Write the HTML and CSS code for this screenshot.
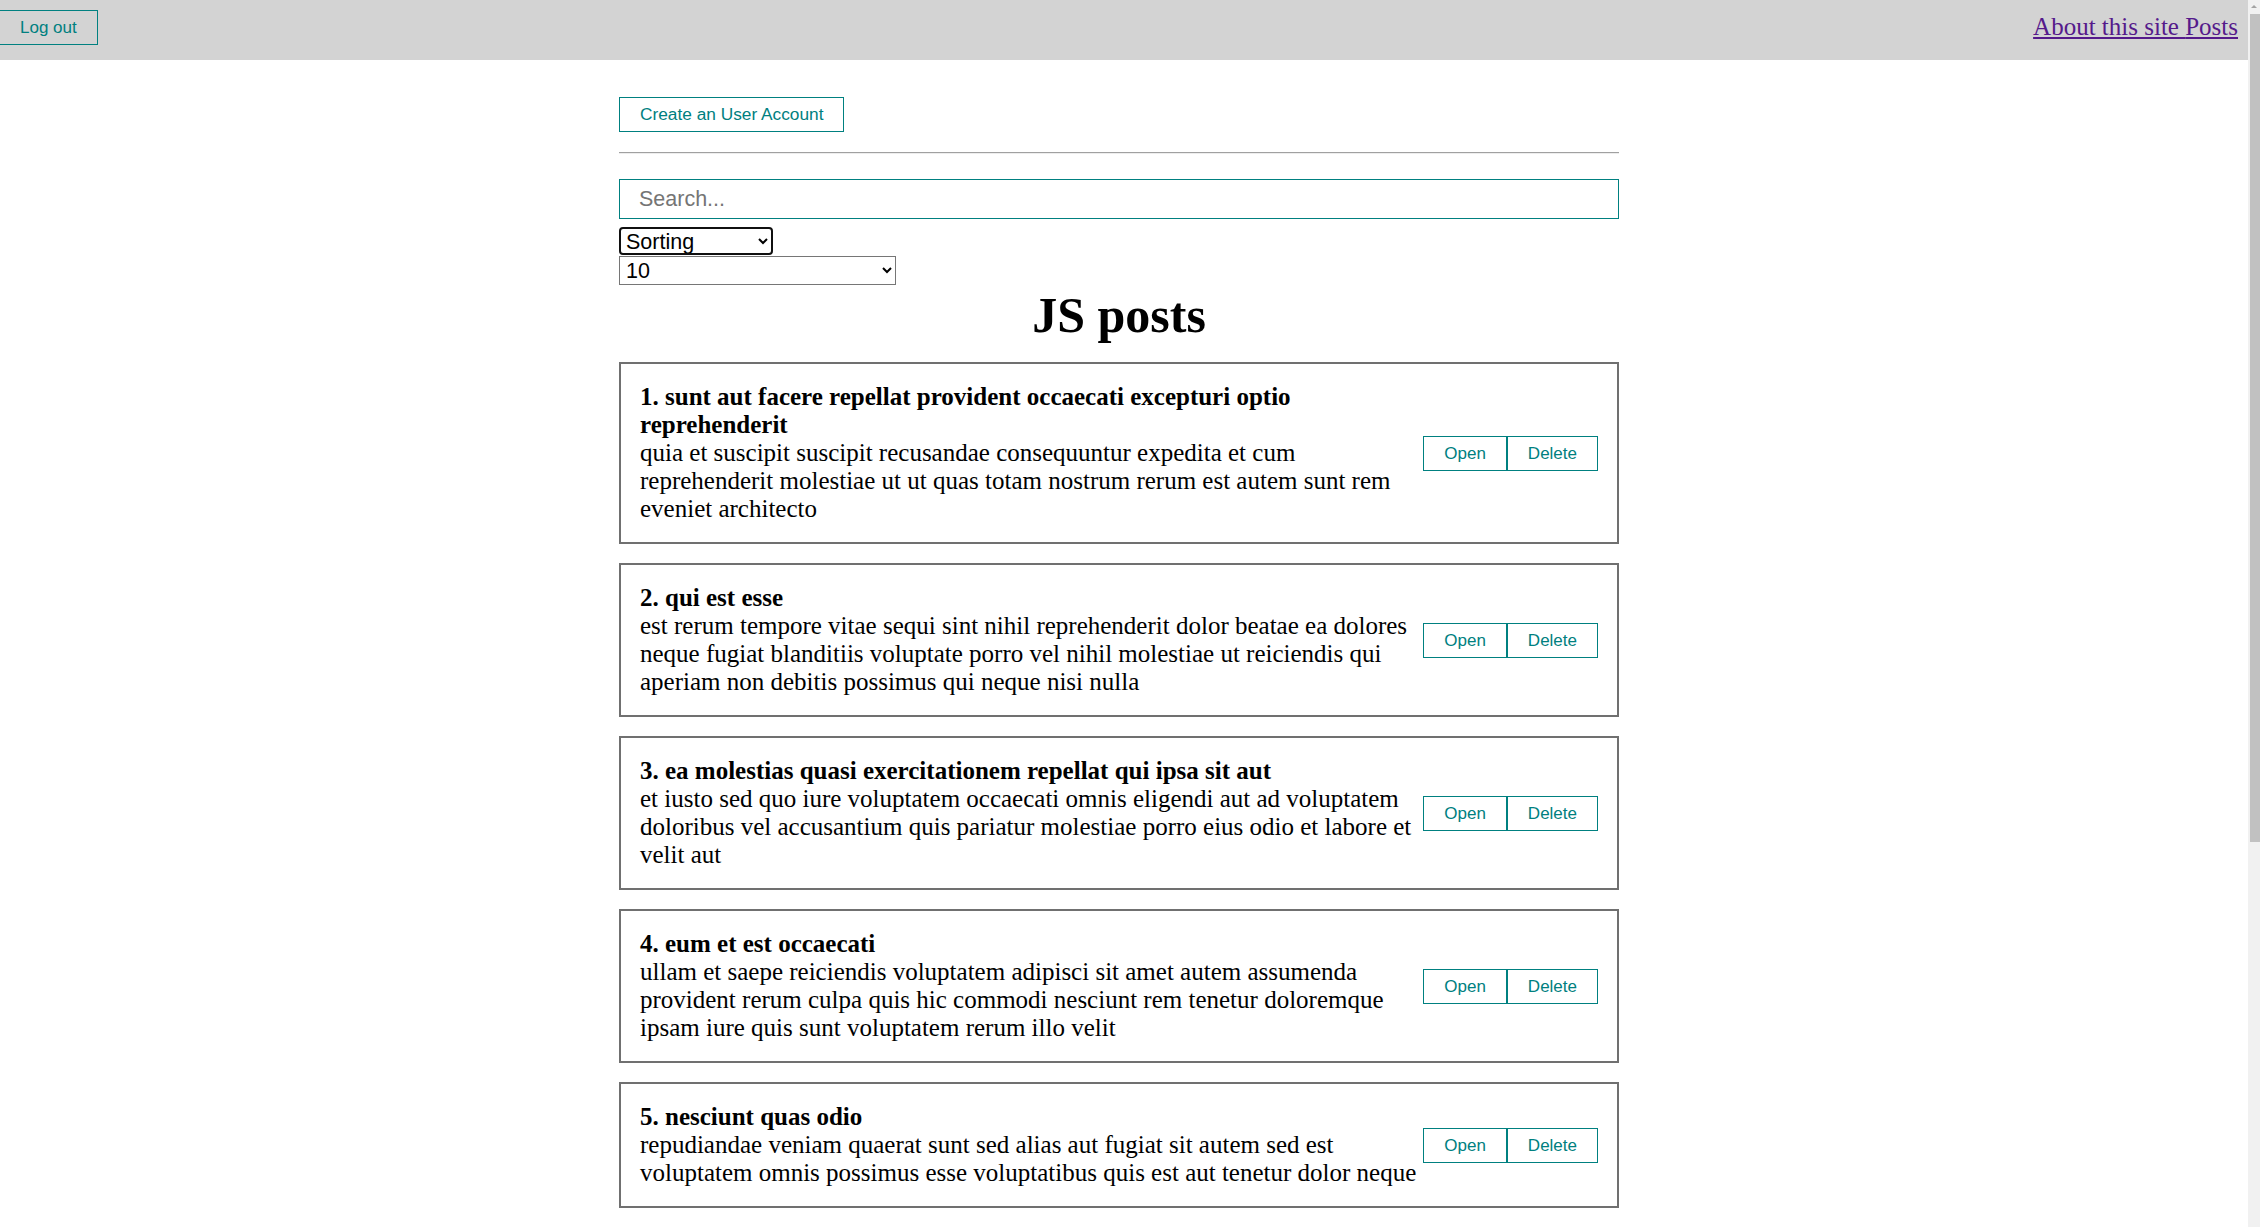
FILE: index.html
```html
<!DOCTYPE html>
<html lang="en">
<head>
<meta charset="utf-8">
<title>JS posts</title>
<link rel="stylesheet" href="styles.css">
</head>
<body>
<header class="navbar">
  <button class="btn btn-logout">Log out</button>
  <nav class="nav-links"><a href="#" class="nav-link">About this site </a><a href="#" class="nav-link">Posts</a></nav>
</header>
<div class="page">
  <main class="app">
    <button class="btn btn-create">Create an User Account</button>
    <hr class="divider">
    <input class="search" type="text" placeholder="Search...">
    <select class="select select-sort">
      <option>Sorting</option>
      <option>By title</option>
      <option>By description</option>
    </select>
    <select class="select select-limit">
      <option>10</option>
      <option>5</option>
      <option>25</option>
      <option>Show all posts</option>
    </select>
    <h1 class="list-title">JS posts</h1>

    <div class="post">
      <div class="post-content">
        <strong class="post-title">1. sunt aut facere repellat provident occaecati excepturi optio reprehenderit</strong>
        <div class="post-body">quia et suscipit suscipit recusandae consequuntur expedita et cum reprehenderit molestiae ut ut quas totam nostrum rerum est autem sunt rem eveniet architecto</div>
      </div>
      <div class="post-btns"><button class="btn btn-small">Open</button><button class="btn btn-small">Delete</button></div>
    </div>

    <div class="post">
      <div class="post-content">
        <strong class="post-title">2. qui est esse</strong>
        <div class="post-body">est rerum tempore vitae sequi sint nihil reprehenderit dolor beatae ea dolores neque fugiat blanditiis voluptate porro vel nihil molestiae ut reiciendis qui aperiam non debitis possimus qui neque nisi nulla</div>
      </div>
      <div class="post-btns"><button class="btn btn-small">Open</button><button class="btn btn-small">Delete</button></div>
    </div>

    <div class="post">
      <div class="post-content">
        <strong class="post-title">3. ea molestias quasi exercitationem repellat qui ipsa sit aut</strong>
        <div class="post-body">et iusto sed quo iure voluptatem occaecati omnis eligendi aut ad voluptatem doloribus vel accusantium quis pariatur molestiae porro eius odio et labore et velit aut</div>
      </div>
      <div class="post-btns"><button class="btn btn-small">Open</button><button class="btn btn-small">Delete</button></div>
    </div>

    <div class="post">
      <div class="post-content">
        <strong class="post-title">4. eum et est occaecati</strong>
        <div class="post-body">ullam et saepe reiciendis voluptatem adipisci sit amet autem assumenda provident rerum culpa quis hic commodi nesciunt rem tenetur doloremque ipsam iure quis sunt voluptatem rerum illo velit</div>
      </div>
      <div class="post-btns"><button class="btn btn-small">Open</button><button class="btn btn-small">Delete</button></div>
    </div>

    <div class="post">
      <div class="post-content">
        <strong class="post-title">5. nesciunt quas odio</strong>
        <div class="post-body">repudiandae veniam quaerat sunt sed alias aut fugiat sit autem sed est voluptatem omnis possimus esse voluptatibus quis est aut tenetur dolor neque</div>
      </div>
      <div class="post-btns"><button class="btn btn-small">Open</button><button class="btn btn-small">Delete</button></div>
    </div>

    <div class="post">
      <div class="post-content">
        <strong class="post-title">6. dolorem eum magni eos aperiam quia</strong>
        <div class="post-body">ut aspernatur corporis harum nihil quis provident sequi mollitia nobis aliquid molestiae perspiciatis et ea nemo ab reprehenderit accusantium quas voluptate dolores velit et doloremque molestiae</div>
      </div>
      <div class="post-btns"><button class="btn btn-small">Open</button><button class="btn btn-small">Delete</button></div>
    </div>

    <div class="post">
      <div class="post-content">
        <strong class="post-title">7. magnam facilis autem</strong>
        <div class="post-body">dolore placeat quibusdam ea quo vitae magni quis enim qui quis quo nemo aut saepe quidem repellat excepturi ut quia sunt ut sequi eos ea sed quas</div>
      </div>
      <div class="post-btns"><button class="btn btn-small">Open</button><button class="btn btn-small">Delete</button></div>
    </div>

    <div class="post">
      <div class="post-content">
        <strong class="post-title">8. dolorem dolore est ipsam</strong>
        <div class="post-body">dignissimos aperiam dolorem qui eum facilis quibusdam animi sint suscipit qui sint possimus cum quaerat magni maiores excepturi ipsam ut commodi dolor voluptatum modi aut vitae</div>
      </div>
      <div class="post-btns"><button class="btn btn-small">Open</button><button class="btn btn-small">Delete</button></div>
    </div>
  </main>
</div>
<div class="scrollbar" aria-hidden="true">
  <div class="scroll-arrow"></div>
  <div class="scroll-thumb"></div>
</div>
</body>
</html>
```

FILE: styles.css
```css
html, body {
  margin: 0;
  padding: 0;
}

body {
  font-family: "Liberation Serif", "Times New Roman", serif;
  font-size: 25px;
  line-height: 28px;
  color: #000;
  background: #fff;
  padding-right: 12px;
}

.navbar {
  display: flex;
  justify-content: space-between;
  align-items: flex-start;
  height: 60px;
  box-sizing: border-box;
  padding: 10px 10px 0 0;
  background: #d3d3d3;
}

.nav-links {
  padding-top: 3px;
}

.nav-link {
  color: #551a8b;
  text-decoration: underline;
}

.btn {
  font-family: "Liberation Sans", Arial, sans-serif;
  font-size: 17px;
  line-height: 17px;
  color: #008080;
  background: transparent;
  border: 1px solid #008080;
  padding: 8px 20px;
  margin: 0;
  cursor: pointer;
}

.btn-logout {
  margin-left: -1px;
}

.page {
  padding: 37px 10px 30px 0;
}

.app {
  width: 1000px;
  margin: 0 auto;
}

.btn-create {
  display: block;
  font-size: 17.3px;
}

.divider {
  margin: 20px 0 0;
  border: 0;
  border-top: 1px solid #a0a0a0;
  border-bottom: 1px solid #ededed;
  height: 0;
}

.search {
  display: block;
  box-sizing: border-box;
  width: 100%;
  height: 40px;
  margin: 25px 0 0;
  padding: 0 19px;
  border: 1px solid #008080;
  font-family: "Liberation Sans", Arial, sans-serif;
  font-size: 21.5px;
  color: #000;
  background: #fff;
  outline: none;
}

.search::placeholder {
  color: #757575;
}

.select {
  display: block;
  box-sizing: border-box;
  font-family: "Liberation Sans", Arial, sans-serif;
  font-size: 21.5px;
  color: #000;
  background: #fff;
}

.select-sort {
  width: 154px;
  height: 28px;
  margin-top: 8px;
  padding: 0 0 0 1px;
  border: 2px solid #101010;
  border-radius: 4px;
}

.select-limit {
  width: 277px;
  height: 29px;
  margin-top: 1px;
  padding: 0 0 0 2px;
  border: 1px solid #767676;
  border-radius: 0;
}

.list-title {
  margin: 2px 0 19px;
  font-size: 50px;
  line-height: 56px;
  font-weight: bold;
  text-align: center;
}

.post {
  display: flex;
  align-items: center;
  padding: 19px;
  margin-bottom: 19px;
  border: 2px solid #707070;
}

.post-content {
  flex: 1;
  min-width: 0;
}

.post-title {
  display: block;
  font-weight: bold;
}

.post-btns {
  display: flex;
  flex-shrink: 0;
}

/* decorative window scrollbar, drawn over the right edge */
.scrollbar {
  position: fixed;
  top: 0;
  right: 0;
  bottom: 0;
  width: 12px;
  background: #f1f1f1;
  display: flex;
  flex-direction: column;
  align-items: flex-end;
}

.scroll-arrow {
  width: 0;
  height: 0;
  margin: 5px 3px 6px 0;
  border-left: 3px solid transparent;
  border-right: 3px solid transparent;
  border-bottom: 3px solid #a3a3a3;
}

.scroll-thumb {
  width: 10px;
  height: 828px;
  background: #c1c1c1;
}
```
